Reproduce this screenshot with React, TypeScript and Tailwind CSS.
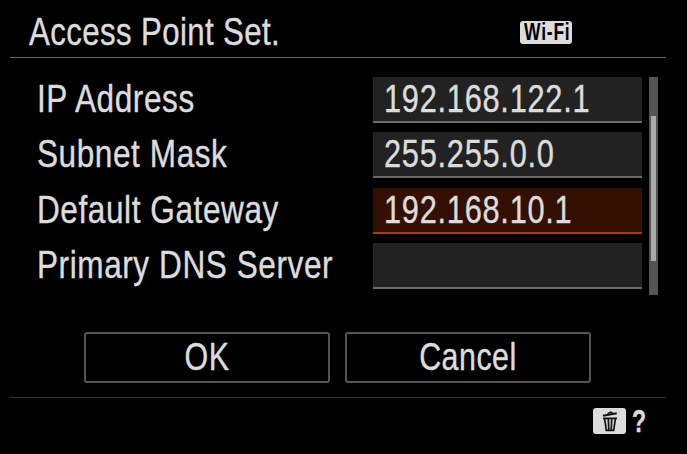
import React from 'react';
import clsx from 'clsx';

const fields = [
  { label: 'IP Address', value: '192.168.122.1' },
  { label: 'Subnet Mask', value: '255.255.0.0' },
  { label: 'Default Gateway', value: '192.168.10.1', selected: true },
  { label: 'Primary DNS Server', value: '' },
];

const Label = ({ children, className }: { children: React.ReactNode; className: string }) => (
  <span
    className={clsx(
      'inline-block whitespace-nowrap text-[38px] leading-[44px] [-webkit-text-stroke:0.4px_#dcdcdc]',
      className,
    )}
  >
    {children}
  </span>
);

const TrashIcon = () => (
  <svg viewBox="0 0 16 21" className="h-[21px] w-4" fill="none" stroke="#111">
    <path d="M1 4.8 14.8 2.2" strokeWidth="2" />
    <path d="M5.4 3.2 8.6 1 10.6 2" strokeWidth="1.4" />
    <path d="M1 7.4h14" strokeWidth="1.8" />
    <path d="M2.6 7.4 4.3 19.3h7.4L13.4 7.4M6.3 8l.5 11M9.7 8l-.5 11" strokeWidth="1.7" />
  </svg>
);

const App = () => {
  return (
    <main className="h-[454px] w-[687px] overflow-hidden bg-black font-['Liberation_Sans',sans-serif] text-[#dcdcdc]">
      <header className="ml-2.5 flex h-[58px] w-[656px] items-start border-b border-[#666] pt-2.5">
        <h1 className="ml-[19px] w-[491px]">
          <Label className="origin-left scale-x-[0.82] tracking-[0.5px]">Access Point Set.</Label>
        </h1>
        <div className="mt-[11px] flex h-[23px] w-[52px] items-center justify-center rounded-[3px] bg-[#dcdcdc]">
          <span className="inline-block scale-x-[0.76] whitespace-nowrap pl-0.5 text-[23px] leading-[23px] font-bold tracking-[1px] text-black">
            Wi-Fi
          </span>
        </div>
      </header>

      <section className="ml-9 mt-[19px] flex h-[218px]">
        <div className="flex w-[606px] flex-col gap-[9.4px]">
          {fields.map((field) => (
            <div key={field.label} className="flex h-[46px]">
              <div className="w-[337px] pl-px">
                <Label className="origin-left scale-x-[0.83] tracking-[0.7px]">{field.label}</Label>
              </div>
              <div
                className={clsx(
                  'h-[46px] w-[269px] border-b-2 pl-[11px]',
                  field.selected ? 'border-[#a53a1c] bg-[#331002]' : 'border-[#6b6b6b] bg-[#222]',
                )}
              >
                <Label className="origin-left scale-x-[0.81] tracking-[0.9px]">{field.value}</Label>
              </div>
            </div>
          ))}
        </div>
        <div className="ml-[7px] w-[9px] bg-[#555] px-0.5 pt-[39px]">
          <div className="h-[145px] bg-[#aaa]" />
        </div>
      </section>

      <div className="ml-[84px] mt-[37px] flex gap-[15px]">
        {['OK', 'Cancel'].map((name) => (
          <button
            key={name}
            className="flex h-[51px] w-[246px] items-center justify-center rounded-[3px] border-2 border-[#555] pb-0.5"
          >
            <Label className="scale-x-[0.8] tracking-[0.6px]">{name}</Label>
          </button>
        ))}
      </div>

      <footer className="ml-2.5 mt-3.5 flex w-[656px] justify-end border-t border-[#333] pt-2.5">
        <div className="flex h-[26px] w-[33px] items-center justify-center rounded-[3px] bg-[#dcdcdc]">
          <TrashIcon />
        </div>
        <span className="mr-[18px] ml-1.5 inline-block w-[16px] origin-left scale-x-[0.72] text-[32px] leading-[26px] font-bold [-webkit-text-stroke:0.4px_#dcdcdc]">
          ?
        </span>
      </footer>
    </main>
  );
};

export default App;
